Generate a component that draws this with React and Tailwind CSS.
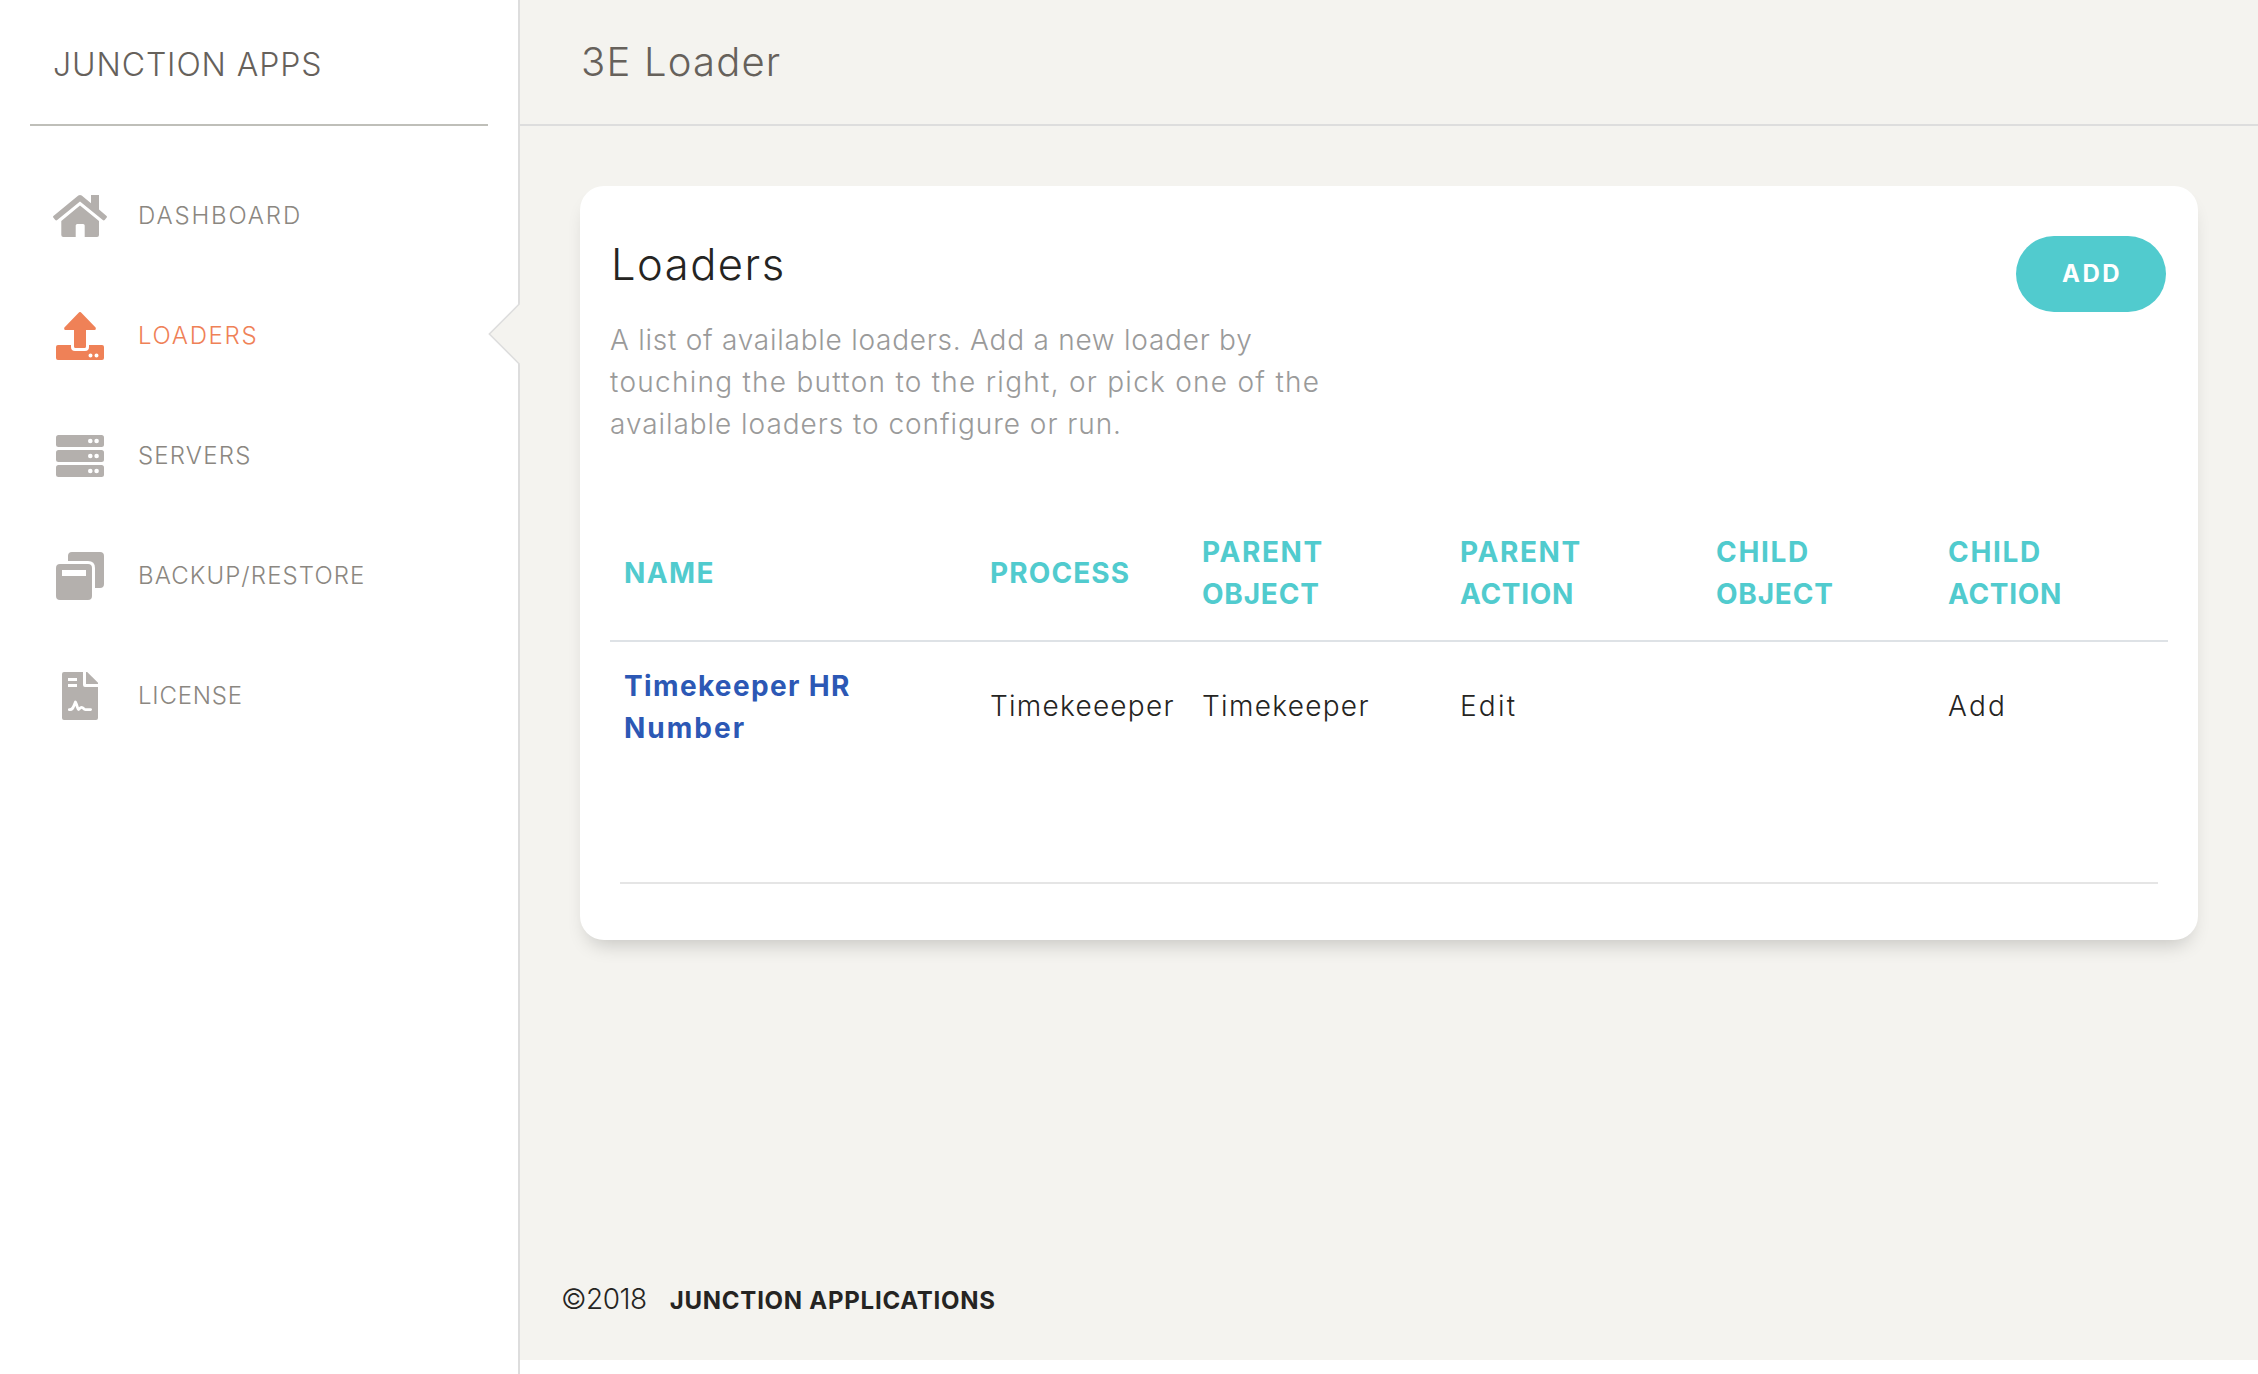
const HomeIcon = () => (
  <svg width="54" height="42" viewBox="0 0 54 42" fill="currentColor">
    <path d="M25.3 .6Q27-.6 28.7 .6L38 8.3V0H46V14.6L53.6 20.9Q54.3 21.7 53.7 22.6L51.7 24.9Q50.8 25.8 49.8 25L27 6.6 4.2 25Q3.2 25.8 2.3 24.9L.3 22.6Q-.3 21.7.4 20.9Z" />
    <path d="M27 10.6L46 26V40Q46 42 44 42H31.7V30.6Q31.7 29 30.1 29H24.3Q22.7 29 22.7 30.6V42H10.3Q8.3 42 8.3 40V26Z" />
  </svg>
);

const LoaderIcon = () => (
  <svg width="48" height="48" viewBox="0 0 48 48" fill="currentColor">
    <path d="M22.9 .5Q24-.6 25.1 .5L39.6 15.6Q40.4 17.8 38.4 18H30V34.5Q30 36 28.5 36H19.5Q18 36 18 34.5V18H9.6Q7.6 17.8 8.4 15.6Z" />
    <path
      fillRule="evenodd"
      d="M2 33H15V35Q15 39 19 39H29Q33 39 33 35V33H46Q48 33 48 35V46Q48 48 46 48H2Q0 48 0 46V35Q0 33 2 33ZM34.5 41.5a2 2 0 1 0 0 4a2 2 0 1 0 0-4ZM40.5 41.5a2 2 0 1 0 0 4a2 2 0 1 0 0-4Z"
    />
  </svg>
);

const ServerIcon = () => (
  <svg width="48" height="42" viewBox="0 0 48 42">
    {[0, 15, 30].map((y) => (
      <g key={y}>
        <rect y={y} width="48" height="12" rx="2.5" fill="currentColor" />
        <circle cx="34.3" cy={y + 6} r="2.3" fill="#fff" />
        <circle cx="40.6" cy={y + 6} r="2.3" fill="#fff" />
      </g>
    ))}
  </svg>
);

const BackupIcon = () => (
  <svg width="48" height="48" viewBox="0 0 48 48" fill="currentColor">
    <path d="M16 0H44Q48 0 48 4V32Q48 36 44 36H39V16Q39 9 32 9H12V4Q12 0 16 0Z" />
    <path
      fillRule="evenodd"
      d="M4 12H32Q36 12 36 16V44Q36 48 32 48H4Q0 48 0 44V16Q0 12 4 12ZM6 18V24H30V18Z"
    />
  </svg>
);

const LicenseIcon = () => (
  <svg width="36" height="48" viewBox="0 0 36 48" fill="currentColor">
    <path
      fillRule="evenodd"
      d="M2 0H21V13Q21 15 23 15H36V46Q36 48 34 48H2Q0 48 0 46V2Q0 0 2 0ZM6 6V9H15V6ZM6 12V15H15V12Z"
    />
    <path d="M24 0H25.2L36 10.8V12H24Z" />
    <path
      d="M7.3 37.6C11 38.2 11.4 34.5 13.4 30C15.3 33.5 15.6 37.5 16.4 37.5C17.4 37.5 17.8 35.4 19.6 35.4C21.6 35.4 21.3 37.6 23.4 37.6H28.6"
      fill="none"
      stroke="#fff"
      strokeWidth="2.8"
      strokeLinecap="round"
      strokeLinejoin="round"
    />
  </svg>
);

const NAV = [
  { label: "DASHBOARD", Icon: HomeIcon, tracking: "tracking-[1.85px]" },
  { label: "LOADERS", Icon: LoaderIcon, tracking: "tracking-[1.7px]", active: true },
  { label: "SERVERS", Icon: ServerIcon, tracking: "tracking-[1.2px]" },
  { label: "BACKUP/RESTORE", Icon: BackupIcon, tracking: "tracking-[1.1px]" },
  { label: "LICENSE", Icon: LicenseIcon, tracking: "tracking-[0.8px]" },
];

const COLUMNS = [
  { width: "w-[366px]", lines: [["NAME", "tracking-[1.4px]"]] },
  { width: "w-[212px]", lines: [["PROCESS", "tracking-[1.1px]"]] },
  { width: "w-[258px]", lines: [["PARENT", "tracking-[1.6px]"], ["OBJECT", "tracking-[0.8px]"]] },
  { width: "w-[256px]", lines: [["PARENT", "tracking-[1.6px]"], ["ACTION", "tracking-[0.7px]"]] },
  { width: "w-[232px]", lines: [["CHILD", "tracking-[1.7px]"], ["OBJECT", "tracking-[0.8px]"]] },
  { width: "w-[234px]", lines: [["CHILD", "tracking-[1.7px]"], ["ACTION", "tracking-[0.7px]"]] },
];

const DESCRIPTION = [
  ["A list of available loaders. Add a new loader by", "tracking-[0.75px]"],
  ["touching the button to the right, or pick one of the", "tracking-[1.26px]"],
  ["available loaders to configure or run.", "tracking-[0.95px]"],
];

function Sidebar() {
  return (
    <aside className="relative w-[520px] shrink-0 border-r-2 border-[#dddddd] bg-white">
      <div className="mx-[30px] flex h-[126px] items-center border-b-2 border-[#bfbfb9] pt-[6px] pl-[23px] text-[32px] font-light tracking-[0.9px] text-[#66615b]">
        JUNCTION APPS
      </div>
      <nav className="pt-[30px]">
        {NAV.map(({ label, Icon, tracking, active }) => (
          <a
            key={label}
            className={`flex h-[120px] items-center pl-[50px] ${active ? "text-[#ef8157]" : "text-[#66615b]"}`}
          >
            <span className={`flex w-[60px] justify-center ${active ? "" : "text-[#b4b0ad]"}`}>
              <Icon />
            </span>
            <span className={`pl-7 text-[24px] font-light ${tracking} ${active ? "" : "text-[#8b8781]"}`}>{label}</span>
          </a>
        ))}
      </nav>
      <svg className="absolute top-[303px] -right-[2px]" width="32" height="62" viewBox="0 0 32 62">
        <path d="M32 0.5L1.4 31L32 61.5Z" fill="#f4f3ef" />
        <path d="M31.5 0.7L1.4 31L31.5 61.3" fill="none" stroke="#dddddd" strokeWidth="1.6" />
      </svg>
    </aside>
  );
}

function LoadersTable() {
  return (
    <table className="mt-[61px] w-[1558px] table-fixed border-separate border-spacing-0 text-left text-[28px] leading-[42px]">
      <thead>
        <tr className="h-[136px] text-[#51cbce]">
          {COLUMNS.map(({ width, lines }, i) => (
            <th key={i} className={`${width} border-b-2 border-[#dee2e6] px-3.5 py-0 font-bold`}>
              {lines.map(([text, tracking]) => (
                <div key={text} className={tracking}>
                  {text}
                </div>
              ))}
            </th>
          ))}
        </tr>
      </thead>
      <tbody>
        <tr className="h-[130px] font-light whitespace-nowrap text-[#252422]">
          <td className="px-3.5 py-0 font-bold text-[#2c58b5]">
            <div className="tracking-[1.35px]">Timekeeper HR</div>
            <div className="tracking-[2px]">Number</div>
          </td>
          <td className="px-3.5 pt-0 pb-0.5 tracking-[1.25px]">Timekeeeper</td>
          <td className="px-3.5 pt-0 pb-0.5 tracking-[1.3px]">Timekeeper</td>
          <td className="px-3.5 pt-0 pb-0.5 tracking-[2.2px]">Edit</td>
          <td />
          <td className="px-3.5 pt-0 pb-0.5 tracking-[2.2px]">Add</td>
        </tr>
      </tbody>
    </table>
  );
}

export default function App() {
  return (
    <div className="flex h-[1374px] w-[2258px] overflow-hidden bg-white font-['Inter',sans-serif]">
      <Sidebar />
      <main className="flex h-[1360px] flex-1 flex-col bg-[#f4f3ef]">
        <header className="flex h-[126px] items-center border-b-2 border-[#dddddd] pl-[61px] text-[40px] font-light tracking-[1.2px] text-[#66615b]">
          3E Loader
        </header>
        <section className="mx-[60px] mt-[60px] h-[754px] rounded-3xl bg-white px-[30px] pt-[50px] shadow-[0_12px_20px_-8px_rgba(0,0,0,0.2)]">
          <div className="flex items-start justify-between">
            <div>
              <h1 className="pl-px text-[43.5px] leading-[56px] font-light tracking-[1.5px] text-[#252422]">Loaders</h1>
              <p className="mt-[27px] text-[28px] leading-[42px] font-light whitespace-nowrap text-[#9a9a9a]">
                {DESCRIPTION.map(([text, tracking]) => (
                  <span key={text} className={`block ${tracking}`}>
                    {text}
                  </span>
                ))}
              </p>
            </div>
            <button className="mr-[2px] h-[76px] w-[150px] rounded-full bg-[#51cbce] pl-[2px] text-[24px] font-bold tracking-[2.4px] text-white">
              ADD
            </button>
          </div>
          <LoadersTable />
          <hr className="mx-2.5 mt-[110px] border-t-2 border-[#e5e5e5]" />
        </section>
        <footer className="mt-auto flex items-baseline pb-[39px] pl-[41px] leading-10 text-[#252422]">
          <span className="text-[28px] font-light tracking-[-0.5px]">©2018</span>
          <span className="pl-[23px] text-[24px] font-bold tracking-[0.75px]">JUNCTION APPLICATIONS</span>
        </footer>
      </main>
    </div>
  );
}
